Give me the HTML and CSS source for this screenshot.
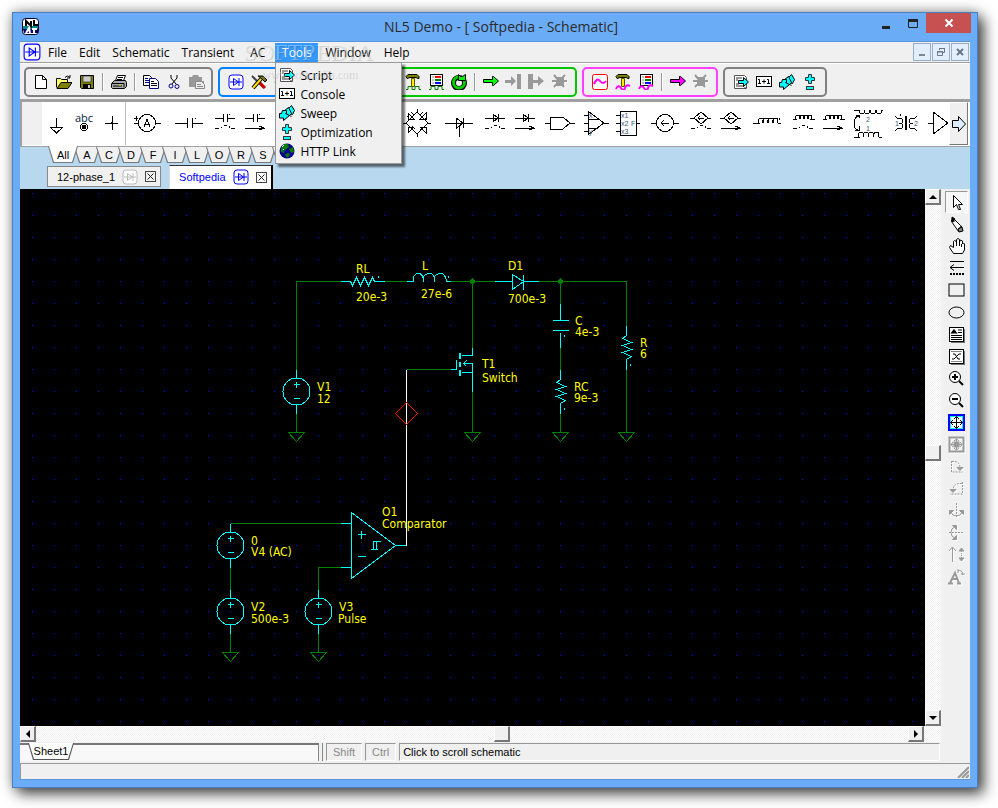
FILE: index.html
```html
<!DOCTYPE html>
<html lang="en">
<head>
<meta charset="utf-8">
<title>NL5 Demo</title>
<link rel="stylesheet" href="styles.css">
</head>
<body>
<svg class="defs" aria-hidden="true">
  <symbol id="diode" viewBox="0 0 16 16"><rect x="1" y="1" width="14" height="14" rx="3" fill="#fff" stroke="currentColor"/><path d="M2 8h12M5.500 4.500v7l5-3.500zM11 4v8" fill="none" stroke="currentColor"/></symbol>
  <symbol id="script" viewBox="0 0 16 16"><path d="M1.500 1.500h10l2 2v11h-12z" fill="#fff" stroke="#555"/><path d="M3 4h6M3 6h2M3 10h3M3 12h8M11 14h2" stroke="#333"/><path d="M5.500 6.500h5v-3l5 4.500-5 4.500v-3h-5z" fill="#0ff" stroke="#000"/></symbol>
  <symbol id="console" viewBox="0 0 16 16"><rect x="0.500" y="2.500" width="15" height="10" fill="#fff" stroke="#000"/><path d="M2 5.500h1.500v4M2 9.500h3M8 5.500v4M6 7.500h4M11 5.500h1.500v4M11 9.500h3" fill="none" stroke="#000"/></symbol>
  <symbol id="sweep" viewBox="0 0 16 16"><path d="M9.500 3.500l3-3 3 5-2 4-4-1z" fill="#0ff" stroke="#000"/><path d="M5.500 5.500l4-3 3 6-3 3z" fill="#0ff" stroke="#000"/><path d="M.500 8.500h2l1-3h4v3h-1l4 2-6 5v-2.500h-4z" fill="#0ff" stroke="#000"/><path d="M10.500 10.500l2 1" stroke="#000"/></symbol>
  <symbol id="optim" viewBox="0 0 16 16"><path d="M6.500.500h3v3h3v3h-3v3h-3v-3h-3v-3h3z" fill="#0ff" stroke="#333"/><rect x="4.500" y="12.500" width="7" height="3" fill="#0ff" stroke="#333"/></symbol>
  <symbol id="globe" viewBox="0 0 16 16"><circle cx="8" cy="8" r="7.500" fill="#00008b"/><path d="M2 5l3-4 4 0 1 3-3 2-2 4-3-1zM10 6l4-2 1 5-3 1zM6 11l4-1 1 2-3 3z" fill="#008000"/><path d="M3 4l2-2M4 7l1-1" stroke="#fff"/><path d="M4 8h2M11 11h2" stroke="#00f"/></symbol>
  <symbol id="hammer" viewBox="0 0 16 16"><path d="M6.500 4.500h3v8h-3z" fill="#fe0" stroke="#550"/><path d="M3 .500h9l2 2v2h-1l-2-1H5l-3 1-1-2z" fill="#808000" stroke="#000"/></symbol>
  <symbol id="sheet" viewBox="0 0 16 16"><rect x="2.500" y=".500" width="12" height="11" fill="#fff" stroke="#000"/><path d="M4 3h2M4 6h2M4 9h2" stroke="#888"/><path d="M7 3h6" stroke="red" stroke-width="2"/><path d="M7 6h6" stroke="green" stroke-width="2"/><path d="M7 9h6" stroke="#00f" stroke-width="2"/></symbol>
  <symbol id="square" viewBox="0 0 16 16"><path d="M1 15.500h2v-3h4v3h3v-3h4v3h2" fill="none" stroke="#008000"/></symbol>
  <symbol id="wave" viewBox="0 0 16 16"><path d="M1 15q2-5 5-1t4 0 5-2" fill="none" stroke="#f0f" stroke-width="2"/></symbol>
  <symbol id="arrow" viewBox="0 0 16 16"><path d="M.500 5.500h9v-3h1l5 4.500-5 4.500h-1v-3h-9z" fill="currentColor" stroke="#000"/></symbol>
  <symbol id="stop" viewBox="0 0 16 16"><path d="M1 8h15M3 3l10 12M14 2L3 14" stroke="#fff" fill="none"/><path d="M0 7h15M2 1l10 12M13 1L2 13M5 4h6v7H5z" stroke="#999" stroke-width="2" fill="#999"/></symbol>
  <symbol id="coils" viewBox="0 0 30 44"><path d="M5 17h3q-1-4 2-4t2 4q-1-4 2-4t2 4q-1-4 2-4t2 4q-1-4 2-4 2 0 1 4h4" fill="none" stroke="#000"/></symbol>
  <symbol id="switched" viewBox="0 0 30 44"><path d="M5 26h4M11 26v-1M14 24l3-1M19 24v2M21 26h4" stroke="#000" fill="none"/></symbol>
  <symbol id="linked" viewBox="0 0 30 44"><path d="M5 26h20M19 24l5 2-5 2" stroke="#000" fill="none"/></symbol>
  <symbol id="caps" viewBox="0 0 30 44"><path d="M5 16h8M13 12v8M17 12v8M17 16h8M19 13v-1" stroke="#000" fill="none"/></symbol>
  <symbol id="diodes" viewBox="0 0 30 44"><path d="M5 16h20M13 12v8l5-4zM18 12v8" stroke="#000" fill="none"/></symbol>
  <symbol id="controlled" viewBox="0 0 30 44"><path d="M4 16h4l7-6 7 6-7 6-7-6M22 16h3M12 16h6M14 14l-2 2 2 2" stroke="#000" fill="none"/></symbol>
  <symbol id="coil" viewBox="0 0 42 44"><path d="M7 21h6q-1-5 2-5t2 5q-1-5 3-5t2 5q-1-5 3-5t2 5q-1-5 3-5 2 0 2 5h3M33 18v-2" stroke="#000" fill="none"/></symbol>
  <symbol id="source" viewBox="-15 -24 30 48"><path d="M0-22v8M0 14v8M-3-7h6M0-10v6M-3 7h6" /><circle r="13.500"/></symbol>
</svg>

<div class="window">
  <header class="titlebar">
    <svg width="18" height="18" viewBox="0 0 18 18"><rect x=".500" y=".500" width="16" height="16" rx="3" fill="#fff" stroke="#002"/><path d="M1 8h15v3H1z" fill="#088"/><path d="M1 11h15v4H2z" fill="#006"/><path d="M4 8V3l5 5V3M12 2v5h4" fill="none" stroke="#000" stroke-width="2"/><path d="M4 15l3-5 1 5M10 11h5M12 11v5" fill="none" stroke="#fff" stroke-width="2"/></svg>
    <h1>NL5 Demo - [ Softpedia - Schematic]</h1>
    <div class="caption-buttons">
      <button aria-label="Minimize"><svg width="10" height="10"><path d="M1 8.500h8" stroke="#222" stroke-width="3"/></svg></button>
      <button aria-label="Maximize"><svg width="10" height="10"><path d="M.500 2v6.500h9V2" fill="none" stroke="#222"/><path d="M0 1.500h10" stroke="#222" stroke-width="3"/></svg></button>
      <button class="close" aria-label="Close"><svg width="10" height="10"><path d="M1.500 1.500l7 7M8.500 1.500l-7 7" stroke="#fff" stroke-width="2"/></svg></button>
    </div>
  </header>

  <div class="client">
    <nav class="menubar">
      <svg class="blue" width="18" height="18"><use href="#diode"/></svg>
      <button>File</button><button>Edit</button><button>Schematic</button><button>Transient</button><button class="ac">AC</button>
      <div class="open-menu">
        <button class="active">Tools</button>
        <div class="dropdown">
          <button><svg width="16" height="16"><use href="#script"/></svg>Script</button>
          <button><svg width="16" height="16"><use href="#console"/></svg>Console</button>
          <button><svg width="16" height="16"><use href="#sweep"/></svg>Sweep</button>
          <button><svg width="16" height="16"><use href="#optim"/></svg>Optimization</button>
          <button><svg width="16" height="16"><use href="#globe"/></svg>HTTP Link</button>
        </div>
        <div class="watermark"><span>SOFTPEDIA</span><small>www.softpedia.com</small></div>
      </div>
      <button>Window</button><button>Help</button>
      <div class="mdi">
        <button aria-label="Minimize document"><svg width="10" height="10"><path d="M2 8h6" stroke="#789" stroke-width="2"/></svg></button>
        <button aria-label="Restore document"><svg width="10" height="10"><path d="M3.500 3V1.500h5v4H7M3 1.500h6M1.500 4.500h5v4h-5zM1 5h6" fill="none" stroke="#678"/></svg></button>
        <button aria-label="Close document"><svg width="10" height="10"><path d="M2 2l6 6M8 2L2 8" stroke="#678" stroke-width="2"/></svg></button>
      </div>
    </nav>

    <div class="toolbar">
      <div class="group file">
        <button aria-label="New"><svg width="16" height="16"><path d="M2.500 1.500h7l4 4v9h-11zM9.500 1.500v4h4" fill="#fff" stroke="#000"/></svg></button>
        <button aria-label="Open"><svg width="16" height="16"><path d="M.500 13.500v-9h4l1 1h6v3" fill="#ff6" stroke="#000"/><path d="M1 14.500l4-6h11l-4 6z" fill="#808000" stroke="#000"/><path d="M9 3.500q2-3 5 0V1M14 4h-3" fill="none" stroke="#000"/></svg></button>
        <button aria-label="Save"><svg width="16" height="16"><path d="M1.500 1.500h13v13h-12l-1-1z" fill="#808000" stroke="#000"/><path d="M4 2h8v6H4z" fill="#ccc" stroke="#000" stroke-width=".500"/><path d="M4 10h8v5H4z"/><path d="M9 11h2v3H9z" fill="#ccc"/></svg></button>
        <i class="sep"></i>
        <button aria-label="Print"><svg width="16" height="16"><path d="M4.500 6.500l2-5h8l-2 5" fill="#fff" stroke="#000"/><path d="M7 3.500h5M6 5.500h5" stroke="#000"/><path d="M.500 9.500l3-3h11l1 2v4l-2 2h-12l-1-1z" fill="#aaa" stroke="#000"/><path d="M1 9.500h12v4M2 12h9" stroke="#000" fill="none"/><path d="M8 11h2" stroke="#ee0"/></svg></button>
        <i class="sep"></i>
        <button aria-label="Copy"><svg width="16" height="16"><path d="M.500 1.500h6l2 2v8h-8z" fill="#fff" stroke="#000"/><path d="M2 4.500h3M2 6.500h4M2 8.500h4" stroke="#008"/><path d="M6.500 4.500h6l3 3v7h-9z" fill="#fff" stroke="#008"/><path d="M8 7.500h3M8 9.500h6M8 11.500h6" stroke="#000"/></svg></button>
        <button aria-label="Cut"><svg width="16" height="16"><path d="M5 1v3l5 6M11 1v3l-5 6" fill="none" stroke="#000"/><circle cx="5" cy="12" r="2" fill="none" stroke="#008"/><circle cx="11" cy="12.500" r="2" fill="none" stroke="#008"/></svg></button>
        <button aria-label="Paste"><svg width="17" height="16"><path d="M1 3h3l1-2h5l1 2h3v4h2v8H7v-2H1z" fill="#999"/><path d="M7.500 7.500h6l3 3v4h-9z" fill="#eee" stroke="#888"/><path d="M9 10.500h4M9 12.500h6" stroke="#888"/></svg></button>
      </div>
      <div class="group schematic">
        <button aria-label="Schematic"><svg class="blue" width="16" height="16"><use href="#diode"/></svg></button>
        <button aria-label="Settings"><svg width="16" height="16"><path d="M1 2l12 12" stroke="#444" stroke-width="2"/><path d="M8 8l6 6" stroke="#c00" stroke-width="3"/><path d="M2 14l8-9" stroke="#000" stroke-width="4"/><path d="M2 14l8-9" stroke="#fd0" stroke-width="2"/><path d="M7 2h5l4 4-2 2-3-3z" fill="#770" stroke="#000"/></svg></button>
        <button aria-label="Run"><svg width="16" height="16"><path d="M1 9l6-6" stroke="#0c0" stroke-width="2"/></svg></button>
        <i class="sep"></i>
      </div>
      <div class="group transient">
        <button aria-label="Transient"></button><button aria-label="Data"></button><button aria-label="Traces"></button><i class="sep"></i>
        <button aria-label="Transient settings"><svg width="16" height="16"><use href="#hammer"/><use href="#square"/></svg></button>
        <button aria-label="Transient data"><svg width="16" height="16"><use href="#sheet"/><use href="#square"/></svg></button>
        <button aria-label="Restart"><svg width="16" height="16"><circle cx="8" cy="9" r="5.500" fill="none" stroke="#000" stroke-width="5"/><circle cx="8" cy="8.500" r="5.500" fill="none" stroke="#0c0" stroke-width="3"/><path d="M7.500 6.500V.500l2 2h2l3-2v6z" fill="#0e0" stroke="#000"/></svg></button>
        <i class="sep"></i>
        <button class="lime" aria-label="Start"><svg width="16" height="16"><use href="#arrow"/></svg></button>
        <button aria-label="Pause"><svg width="17" height="16"><path d="M0 6h6V2l5 5-5 5V9H0zM12 0h4v15h-4z" fill="#999"/></svg></button>
        <button aria-label="Continue"><svg width="17" height="16"><path d="M0 0h5v15H0zM5 6h5V2l6 5-6 5V9H5z" fill="#999"/></svg></button>
        <button aria-label="Stop"><svg width="16" height="16"><use href="#stop"/></svg></button>
      </div>
      <div class="group ac-tools">
        <button aria-label="AC"><svg width="16" height="16"><rect x=".500" y=".500" width="15" height="15" rx="2" fill="#fff" stroke="red"/><path d="M2 10q3-7 6-3t6 0" fill="none" stroke="#f0f" stroke-width="2"/></svg></button>
        <button aria-label="AC settings"><svg width="16" height="16"><use href="#hammer"/><use href="#wave"/></svg></button>
        <button aria-label="AC data"><svg width="16" height="16"><use href="#sheet"/><use href="#wave"/></svg></button>
        <i class="sep"></i>
        <button class="pink" aria-label="Start AC"><svg width="16" height="16"><use href="#arrow"/></svg></button>
        <button aria-label="Stop AC"><svg width="16" height="16"><use href="#stop"/></svg></button>
      </div>
      <div class="group tools">
        <button aria-label="Script"><svg width="16" height="16"><use href="#script"/></svg></button>
        <button aria-label="Console"><svg width="16" height="16"><use href="#console"/></svg></button>
        <button aria-label="Sweep"><svg width="16" height="16"><use href="#sweep"/></svg></button>
        <button aria-label="Optimization"><svg width="16" height="16"><use href="#optim"/></svg></button>
      </div>
    </div>

    <div class="palette">
      <div class="parts">
        <svg width="28" height="44"><path d="M14 16v9M8 25h13l-6.500 6z"/></svg>
        <svg width="28" height="44"><text x="5" y="20" class="abc">abc</text><circle cx="14" cy="25" r="3.500"/><circle class="dot" cx="14" cy="25" r="2"/></svg>
        <svg width="27" height="44"><path d="M7 21h13M14 14v14"/><circle class="dot" cx="14" cy="21" r="1"/></svg>
        <i class="part-sep"></i>
        <svg width="42" height="44"><circle cx="21" cy="21" r="8.500"/><path d="M8 21h5M30 21h5M8 16h4M10 14v5M18 25l3-8 3 8M19 22h4"/></svg>
        <svg width="42" height="44"><path d="M7 21h12M19 16v10M24 16v10M24 21h11M27 17v-1"/></svg>
        <svg width="30" height="44"><use href="#caps"/><use href="#switched"/></svg>
        <svg width="30" height="44"><use href="#caps"/><use href="#linked"/></svg>
        <svg width="126" height="44"></svg>
        <svg width="42" height="44"><path d="M7 21h3l11-11 11 11-11 11-11-11M32 21h3M21 7v3M21 32v3M12 11v6h6zM11 15l3-3M24 17h6v-6zM28 18l3-3M12 31v-6h6zM16 24l3 3M24 25h6v6zM24 28l3-3M15 10l3 3M27 10l-3 3"/></svg>
        <svg width="42" height="44"><path d="M7 21h28M18 16v11l7-6zM25 16v10M21 23v12"/></svg>
        <svg width="30" height="44"><use href="#diodes"/><use href="#switched"/></svg>
        <svg width="30" height="44"><use href="#diodes"/><use href="#linked"/></svg>
        <svg width="40" height="44"><path d="M5 21h5v-6h13l7 6-7 6H10v-6M30 21h5"/></svg>
        <svg width="32" height="44"><path d="M8 9v24l16-12zM4 13h4M4 29h4M8 17h10M8 26h10M24 21h5M4 21h4"/><text x="9" y="16" class="pin">x</text><text x="9" y="32" class="pin">y</text></svg>
        <svg width="32" height="44"><path d="M8 9h16v24H8zM4 13h4M4 21h4M4 29h4M24 21h4"/><text x="9" y="16" class="pin">x1</text><text x="9" y="24" class="pin">x2</text><text x="9" y="32" class="pin">x3</text><text x="19" y="24" class="pin">F</text></svg>
        <svg width="42" height="44"><circle cx="21" cy="21" r="8.500"/><path d="M7 21h5M30 21h5M17 21h8M20 18l-3 3 3 3"/></svg>
        <svg width="30" height="44"><use href="#controlled"/><use href="#switched"/></svg>
        <svg width="30" height="44"><use href="#controlled"/><use href="#linked"/></svg>
        <svg width="42" height="44"><use href="#coil"/></svg>
        <svg width="30" height="44"><use href="#coils"/><use href="#switched"/></svg>
        <svg width="30" height="44"><use href="#coils"/><use href="#linked"/></svg>
        <svg width="40" height="44"><path d="M6 8h5q0 4 3 4t2-4q0 4 3 4t3-4q0 4 3 4t3-4q0 4 3 4t2-4h2M6 35h5q-1-5 2-5t3 5q-1-5 2-5t3 5q-1-5 2-5t3 5q-1-5 3-5 2 0 2 5h3M11 14q-5 1-5 7t4 7M8 13h3v3M7 28h4v-4"/><text x="18" y="20" class="pin">2</text><text x="18" y="29" class="pin">1</text></svg>
        <svg width="36" height="44"><path d="M7 14l3 3q5-1 5 2t-4 2q4 0 4 3t-5 2l-3 3M12 14v-2M29 14l-3 3q-5-1-5 2t4 2q-4 0-4 3t5 2l3 3M17 14v14M18 14v14"/><text x="7" y="24" class="pin">1</text><text x="26" y="24" class="pin">2</text></svg>
        <svg width="25" height="44"><path d="M4 21h5V10l15 11L9 32V21"/></svg>
      </div>
      <button class="more" aria-label="More components"><svg width="16" height="18"><path d="M1.500 5.500h6v-4l7 7.500-7 7.500v-4h-6z" fill="#def" stroke="#000"/></svg></button>
    </div>

    <div class="part-tabs">
      <button class="all">All</button><button>A</button><button>C</button><button>D</button><button>F</button><button>I</button><button>L</button><button>O</button><button>R</button><button>S</button><button aria-label="T"></button><button aria-label="V"></button><button aria-label="W"></button><button aria-label="X"></button><button aria-label="Y"></button>
    </div>

    <div class="doc-tabs">
      <div class="doc"><span>12-phase_1</span><svg class="gray" width="16" height="16"><use href="#diode"/></svg><button aria-label="Close 12-phase_1"><svg width="9" height="9"><path d="M1.500 1.500l6 6M7.500 1.500l-6 6" stroke="#222"/></svg></button></div>
      <div class="doc current"><span>Softpedia</span><svg width="16" height="16"><use href="#diode"/></svg><button aria-label="Close Softpedia"><svg width="9" height="9"><path d="M1.500 1.500l6 6M7.500 1.500l-6 6" stroke="#222"/></svg></button></div>
    </div>

    <main class="work">
      <section class="left">
        <div class="view">
          <svg class="canvas">
            <defs><pattern id="dots" width="22" height="22" patternUnits="userSpaceOnUse"><rect x="12" y="4" width="1" height="1" fill="#00f"/></pattern></defs>
            <rect width="100%" height="100%" fill="url(#dots)"/>
            <g transform="translate(-19.500 -188.500)">
              <g class="wire">
                <path d="M296 369V281H340M384 281h22M450 281h44M538 281h88v44M472 281v66M406 369h44M560 281v22M560 347v22M560 413v19M626 369v63M472 391v41M296 413v19M230 523h110M230 567v22M230 633v19M318 589v-22h22M318 633v19"/>
                <path d="M288 432h16l-8 9zM464 432h16l-8 9zM552 432h16l-8 9zM618 432h16l-8 9zM222 652h16l-8 9zM310 652h16l-8 9z"/>
                <path class="node" d="M470 281l2-2 2 2-2 2zM558 281l2-2 2 2-2 2z"/>
              </g>
              <g class="part">
                <path d="M340 281h10l2 4 4-8 4 8 4-8 4 8 4-8 2 4h10M378 275v2"/>
                <path d="M406 281h7v-4q1-4 5-4t5 6v2v-4q1-4 6-4t5 6v2v-4q1-4 6-4t6 8h4M448 275v2"/>
                <path d="M494 281h18M512 274v15l11-8zM523 274v15M523 281h15"/>
                <path d="M472 347v8h-11M461 372h11M472 391v-28h-10M466 360l-3 3 3 3M450 369h6v-10"/>
                <path class="thick" d="M459.500 352v6M459.500 361v5M459.500 369v6"/>
                <path d="M560 303v17M552 320h16M552 330h16M560 332v15M564 334v2"/>
                <path d="M560 369v10l-4 3 9 4-9 3 9 4-9 3 9 4-5 3v10M564 407v2"/>
                <path d="M626 325v10l-4 3 9 4-9 3 9 4-9 3 9 4-5 3v10M630 363v2"/>
                <path d="M351 512v66l44-33zM340 523h11M340 567h11M395 545h11M357 534h8M361 530v8M357 556h8M370 549h7M373 549v-8h7M376 541v8"/>
                <use href="#source" x="281" y="367" width="30" height="48"/>
                <use href="#source" x="215" y="521" width="30" height="48"/>
                <use href="#source" x="215" y="587" width="30" height="48"/>
                <use href="#source" x="303" y="587" width="30" height="48"/>
              </g>
            </g>
            <g class="label" transform="translate(-20 -189)">
              <text x="356" y="273">RL</text><text x="356" y="301">20e-3</text><text x="422" y="270">L</text><text x="421" y="298">27e-6</text>
              <text x="508" y="270">D1</text><text x="508" y="303">700e-3</text><text x="482" y="368">T1</text><text x="482" y="382">Switch</text>
              <text x="575" y="325">C</text><text x="575" y="336">4e-3</text><text x="574" y="391">RC</text><text x="574" y="402">9e-3</text>
              <text x="640" y="347">R</text><text x="640" y="358">6</text><text x="317" y="391">V1</text><text x="317" y="403">12</text>
              <text x="382" y="516">O1</text><text x="382" y="528">Comparator</text><text x="251" y="545">0</text><text x="251" y="556">V4 (AC)</text>
              <text x="251" y="611">V2</text><text x="251" y="623">500e-3</text><text x="339" y="611">V3</text><text x="338" y="623">Pulse</text>
            </g>
            <g transform="translate(-19.500 -188.500)" fill="none">
              <path d="M406 369v176" stroke="#fff"/>
              <path d="M406 402l11 11-11 11-11-11z" stroke="red"/>
            </g>
          </svg>
          <div class="scroll vertical">
            <button aria-label="Scroll up"><svg width="8" height="4"><path d="M4 0l4 4H0z"/></svg></button>
            <i class="track above"></i><b class="thumb"></b><i class="track below"></i>
            <button aria-label="Scroll down"><svg width="8" height="4"><path d="M0 0h8L4 4z"/></svg></button>
          </div>
        </div>
        <div class="scroll horizontal">
          <button aria-label="Scroll left"><svg width="4" height="8"><path d="M4 0v8L0 4z"/></svg></button>
          <i class="track before"></i><b class="thumb"></b><i class="track after"></i>
          <button aria-label="Scroll right"><svg width="4" height="8"><path d="M0 0l4 4-4 4z"/></svg></button>
        </div>
        <div class="sheetbar">
          <div class="sheets"><button class="sheet-tab">Sheet1</button></div>
          <div class="splitter"></div>
          <div class="cell key">Shift</div><div class="cell key">Ctrl</div><div class="cell hint">Click to scroll schematic</div>
        </div>
      </section>
      <aside class="side">
        <button class="on" aria-label="Select"><svg width="17" height="17"><path d="M5.500 1.500v12l3-3 2 5h2l-2-5h4z" fill="#fff"/></svg></button>
        <button aria-label="Draw wire"><svg width="17" height="17"><path d="M4.500 1.500l-1 4 7 10 4-1-2-5-6-6z" fill="#fff"/><path d="M4 1l3 2-3 3zM5 6l3-2M10 13l4-3" fill="#000"/><path d="M10 13l4-2 1 4-4 1z" fill="#888"/></svg></button>
        <button aria-label="Pan"><svg width="17" height="17"><path d="M5.500 15.500l-4-6 1-2 3 2V3.500l1-1 2 1v-2l1.500-1 1.500 1V4l1-2 2 1v3l1-1 1 1v6l-2 3.500z" fill="#fff"/><path d="M8.500 3v5M11.500 4v4M13.500 6v3" fill="none"/></svg></button>
        <button aria-label="Line"><svg width="17" height="17"><path d="M2 1.500h14M2 7.500h14M6 4.500l-4 3 4 3" fill="none"/><path d="M2 14h14" stroke-width="2" stroke-dasharray="2 1"/></svg></button>
        <button aria-label="Rectangle"><svg width="17" height="17"><rect x="1" y="2" width="15" height="12" fill="none"/></svg></button>
        <button aria-label="Ellipse"><svg width="17" height="17"><ellipse cx="8.500" cy="8.500" rx="7.500" ry="5.500" fill="none"/></svg></button>
        <button aria-label="Text"><svg width="17" height="17"><path d="M3 16h14V3" fill="none" stroke="#777" stroke-width="2"/><rect x="1.500" y="1.500" width="14" height="14" fill="#fff"/><path d="M3 7.500l3-4 3 4M4 6h4M10 4h4M10 6.500h4M3 9.500h11M3 11.500h11M3 13.500h11"/></svg></button>
        <button aria-label="Variable"><svg width="17" height="17"><path d="M3 16h14V3" fill="none" stroke="#777" stroke-width="2"/><rect x="1.500" y="1.500" width="14" height="14" fill="#fff"/><path d="M3 3.500h11M3 13.500h11" stroke="#888"/><path d="M4 11h2l5-5h2M5 6h2l3 5h2" fill="none"/></svg></button>
        <button aria-label="Zoom in"><svg width="17" height="17"><circle cx="7" cy="7" r="5.500" fill="#fff"/><path d="M4 7h6M7 4v6" stroke-width="2"/><path d="M11 11l4 4" stroke-width="2"/></svg></button>
        <button aria-label="Zoom out"><svg width="17" height="17"><circle cx="7" cy="7" r="5.500" fill="#fff"/><path d="M4 7h6" stroke-width="2"/><path d="M11 11l4 4" stroke-width="2"/></svg></button>
        <button aria-label="Fit"><svg width="17" height="17"><rect x="1" y="1" width="15" height="15" fill="#fff" stroke="#00f" stroke-width="2"/><rect x="2.500" y="2.500" width="12" height="12" fill="none" stroke="#0ff"/><path d="M2 8.500h13M8.500 2v13M5 6L2.500 8.500 5 11M12 6l2.500 2.500L12 11M6 5l2.500-2.500L11 5M6 12l2.500 2.500L11 12" fill="none"/></svg></button>
        <button disabled aria-label="Fit selection"><svg width="17" height="17"><rect x="1.500" y="1.500" width="14" height="14" fill="none" stroke-width="2"/><path d="M3 8.500h11M8.500 3v11M5 6l-2 2.500L5 11M12 6l2 2.500L12 11M6 5l2.500-2L11 5M6 12l2.500 2L11 12" fill="none"/><rect x="6" y="6" width="5" height="5" fill="#999"/></svg></button>
        <button disabled aria-label="Rotate right"><svg width="17" height="17"><path d="M3.500 3v11h11M4 3.500q8-1 8 7" fill="none" stroke-dasharray="2 1"/><path d="M9 9.500h6l-3 3z" fill="#999"/></svg></button>
        <button disabled aria-label="Rotate left"><svg width="17" height="17"><path d="M14.500 2v12H2M14 3.500Q5 3 5 10" fill="none" stroke-dasharray="2 1"/><path d="M2 9.500h6l-3 3z" fill="#999"/></svg></button>
        <button disabled aria-label="Flip horizontally"><svg width="17" height="17"><path d="M8.500 1v14" stroke-dasharray="2 1"/><path d="M3 10q1 4 5.500 4t5.500-4" fill="none"/><path d="M1.500 12.500v-4h4zM15.500 12.500v-4h-4z" fill="#999"/></svg></button>
        <button disabled aria-label="Flip vertically"><svg width="17" height="17"><path d="M1 8.500h15" stroke-dasharray="2 1"/><path d="M7 3Q3 4 3 8.500T7 14" fill="none"/><path d="M4.500 1.500h4v4zM4.500 15.500h4v-4z" fill="#999"/></svg></button>
        <button disabled aria-label="Order"><svg width="17" height="17"><path d="M4.500 16V2M1 5l3.500-4L8 5" fill="none"/><path d="M13.500 5v8" stroke-dasharray="1 1"/><path d="M11 5l2.500-3L16 5zM11 12l2.500 3 2.500-3z" fill="#999"/></svg></button>
        <button disabled aria-label="Rotate text"><svg width="17" height="17"><path d="M2 15l5-10 4 10M4 11h6M0 15.500h5M9 15.500h4" fill="none" stroke-width="2"/><path d="M10 3q4-2 5 4M10 1v4M13 6h4" fill="none"/></svg></button>
      </aside>
    </main>
    <footer class="status"><svg width="12" height="12"><path d="M1 12L12 1M5 12l7-7M9 12l3-3" stroke="#999" stroke-width="2"/></svg></footer>
  </div>
</div>
</body>
</html>
```

FILE: styles.css
```css
* { box-sizing: border-box; }
body { margin: 0; height: 100vh; padding: 12px 20px 20px 12px; background: #fff; font: 11px/14px "Liberation Sans", Arial, sans-serif; color: #000; }
button { font: inherit; color: inherit; border: 0; padding: 0; margin: 0; background: none; }
svg { display: block; flex: none; }
.defs { position: absolute; width: 0; height: 0; }
.window { height: 100%; display: flex; flex-direction: column; border: 1px solid #4880c4; background: #6bacf7; padding: 0 7px 7px; box-shadow: 6px 6px 13px rgba(0,0,0,.65), 0 0 12px rgba(0,0,0,.35); }

.titlebar { display: flex; align-items: center; height: 28px; flex: none; padding-left: 2px; }
.titlebar h1 { flex: 1; margin: 0; padding-left: 90px; text-align: center; font: 14px/28px "Open Sans", sans-serif; color: #2a2a2a; }
.caption-buttons { display: flex; align-self: flex-start; margin-right: -1px; }
.caption-buttons button { width: 27px; height: 22px; display: grid; place-items: center; }
.caption-buttons .close { width: 45px; height: 20px; background: #c75050; }

.client { flex: 1; min-height: 0; display: flex; flex-direction: column; background: #f0f0f0; border: 1px solid #5a96dc; border-width: 1px 0; }

.menubar { display: flex; align-items: center; height: 20px; flex: none; padding-left: 3px; font: 12px/19px "Open Sans", sans-serif; }
.menubar > button, .active { padding: 0 6px; height: 19px; }
.menubar > .ac { padding: 0 10px; }
.menubar > svg { margin-right: 1px; }
.menubar > .open-menu + button { padding: 0 7px; }
.blue { color: #00f; }
.gray { color: #bbb; }
.open-menu { position: relative; z-index: 5; }
.active { display: block; width: 43px; background: #3399ff; color: #fff; }
.dropdown { position: absolute; top: 19px; left: 0; width: 127px; padding: 3px 2px 2px; background: #f0f0f0; border: 1px solid #999; box-shadow: 3px 3px 2px rgba(0,0,0,.55); }
.dropdown button { display: flex; align-items: center; gap: 5px; width: 100%; height: 19px; padding-left: 1px; text-align: left; white-space: nowrap; }
.watermark { position: absolute; top: -2px; left: -32px; font: 24px/22px "Liberation Serif", serif; color: rgba(255,255,255,.35); text-shadow: 1px 1px 1px rgba(0,0,0,.15); pointer-events: none; }
.watermark small { display: block; padding-left: 18px; font-size: 12px; }
.mdi { display: flex; gap: 1px; margin-left: auto; padding-right: 1px; }
.mdi button { width: 18px; height: 18px; display: grid; place-items: center; border: 1px solid #9aaccc; background: #e2eefb; }

.toolbar { display: flex; gap: 5px; height: 38px; flex: none; padding: 4px; border-top: 1px solid #a0a0a0; border-bottom: 1px solid #a0a0a0; box-shadow: inset 0 1px #fff; }
.group { display: flex; align-items: center; height: 30px; padding: 0 4px; border: 2px solid #808080; border-radius: 5px; }
.group button { width: 23px; height: 24px; display: grid; place-items: center; }
.sep { width: 9px; height: 18px; background: linear-gradient(90deg, transparent 4px, #999 4px, #999 5px, #fff 5px, #fff 6px, transparent 6px); }
.file { padding: 0 3px; }
.schematic { border-color: #0080ff; padding-right: 8px; }
.transient { border-color: #00c800; }
.ac-tools { border-color: #ff40ff; }
.lime { color: #0f0; }
.pink { color: #f0f; }

.palette { display: flex; height: 47px; flex: none; padding: 0 2px 1px 0; border-top: 2px solid #a0a0a0; border-left: 2px solid #a0a0a0; border-bottom: 1px solid #a0a0a0; background: #fff; }
.parts { flex: 1; min-width: 0; display: flex; overflow: hidden; border-left: 20px solid #f0f0f0; }
.parts svg { fill: none; stroke: #000; shape-rendering: crispEdges; }
.parts text { stroke: none; fill: #000; }
.parts .dot { fill: #000; }
.part-sep { width: 1px; background: #bbb; }
.parts .abc { font: 11px "Open Sans", sans-serif; fill: #024; }
.parts .pin { font: 7px "Liberation Sans", sans-serif; fill: #357; }
.more { width: 19px; display: grid; place-items: center; background: #f0f0f0; border: 1px solid #fff; border-right-color: #777; border-bottom-color: #777; }

.part-tabs { display: flex; height: 18px; flex: none; padding-left: 28px; background: #b8d8f0; }
.part-tabs button { position: relative; isolation: isolate; width: 26px; height: 16px; margin-right: -4px; line-height: 16px; }
.part-tabs button::before, .part-tabs button::after { content: ""; position: absolute; z-index: -1; inset: 0; background: #777; clip-path: polygon(0 0, 100% 0, calc(100% - 5px) 100%, 5px 100%); }
.part-tabs button::after { inset: 0 1px 1px; background: #f0f0f0; }
.part-tabs .all { width: 30px; z-index: 1; margin-top: -1px; height: 17px; line-height: 18px; }
.part-tabs .all::after { background: #fff; }

.doc-tabs { display: flex; align-items: flex-end; gap: 8px; height: 24px; flex: none; padding-left: 27px; background: #b8d8f0; }
.doc { display: flex; align-items: center; gap: 7px; height: 21px; margin-bottom: 2px; padding: 0 4px 0 9px; background: #f0f0f0; border: 1px solid #888; }
.doc button { display: grid; place-items: center; width: 11px; height: 11px; border: 1px solid #444; }
.doc.current { height: 24px; margin: 0; padding-bottom: 1px; background: #fff; color: #00f; border: 1px solid #ddd; border-right: 2px solid #000; border-top-color: #333; border-bottom: 0; }

.work { flex: 1; min-height: 0; display: flex; }
.left { flex: 1; min-width: 0; display: flex; flex-direction: column; }
.view { flex: 1; min-height: 0; display: flex; }
.canvas { flex: 1; min-width: 0; width: 100%; height: 100%; background: #000; shape-rendering: crispEdges; }
.wire { stroke: #008000; fill: none; }
.wire .node { fill: #008000; stroke-width: 2; }
.part { stroke: #0ff; fill: none; }
.part .thick { stroke-width: 2; }
.label { fill: #ff0; font: 12px "DejaVu Sans Condensed", "DejaVu Sans", sans-serif; }

.scroll { display: flex; flex: none; background: repeating-conic-gradient(#fff 0 25%, #f0f0f0 0 50%) 0 0 / 2px 2px; }
.scroll button, .thumb { width: 16px; height: 16px; flex: none; display: grid; place-items: center; background: #f0f0f0; border: 1px solid #fff; border-right: 2px solid #777; border-bottom: 2px solid #777; }
.track { flex: 1; }
.vertical { flex-direction: column; width: 16px; }
.horizontal { height: 16px; padding-right: 17px; }
.above { flex-grow: 24; }
.below { flex-grow: 25; }
.before { flex-grow: 23; }
.after { flex-grow: 20; }

.sheetbar { display: flex; flex: none; height: 21px; gap: 3px; padding: 1px 1px 2px 0; }
.sheets { width: 299px; padding-left: 8px; border-top: 2px solid #777; border-right: 1px solid #888; background: #f8f8f8; }
.sheet-tab { position: relative; isolation: isolate; display: block; width: 46px; height: 17px; margin-top: -2px; line-height: 17px; }
.sheet-tab::before, .sheet-tab::after { content: ""; position: absolute; z-index: -1; inset: 0; background: #555; clip-path: polygon(0 0, 100% 0, calc(100% - 5px) 100%, 5px 100%); }
.sheet-tab::after { inset: 0 1px 1px; background: #fff; }
.splitter { width: 1px; background: #888; }
.cell { border: 1px solid #fff; border-top-color: #999; border-left-color: #999; padding: 0 6px; line-height: 16px; }
.key { color: #888; }
.hint { flex: 1; padding: 0 3px; }

.side { width: 29px; padding: 2px 2px 0 4px; }
.side button { width: 23px; height: 22px; display: grid; place-items: center; }
.side svg { stroke: #000; }
.side button:disabled svg { stroke: #999; filter: drop-shadow(1px 1px #fff); }
.side .on { border: 1px solid #999; border-right-color: #fff; border-bottom-color: #fff; background: #f6f6f6; }

.status { display: flex; justify-content: flex-end; align-items: flex-end; height: 16px; flex: none; padding: 0 1px 1px 0; border-top: 1px solid #999; border-left: 1px solid #999; }
```
